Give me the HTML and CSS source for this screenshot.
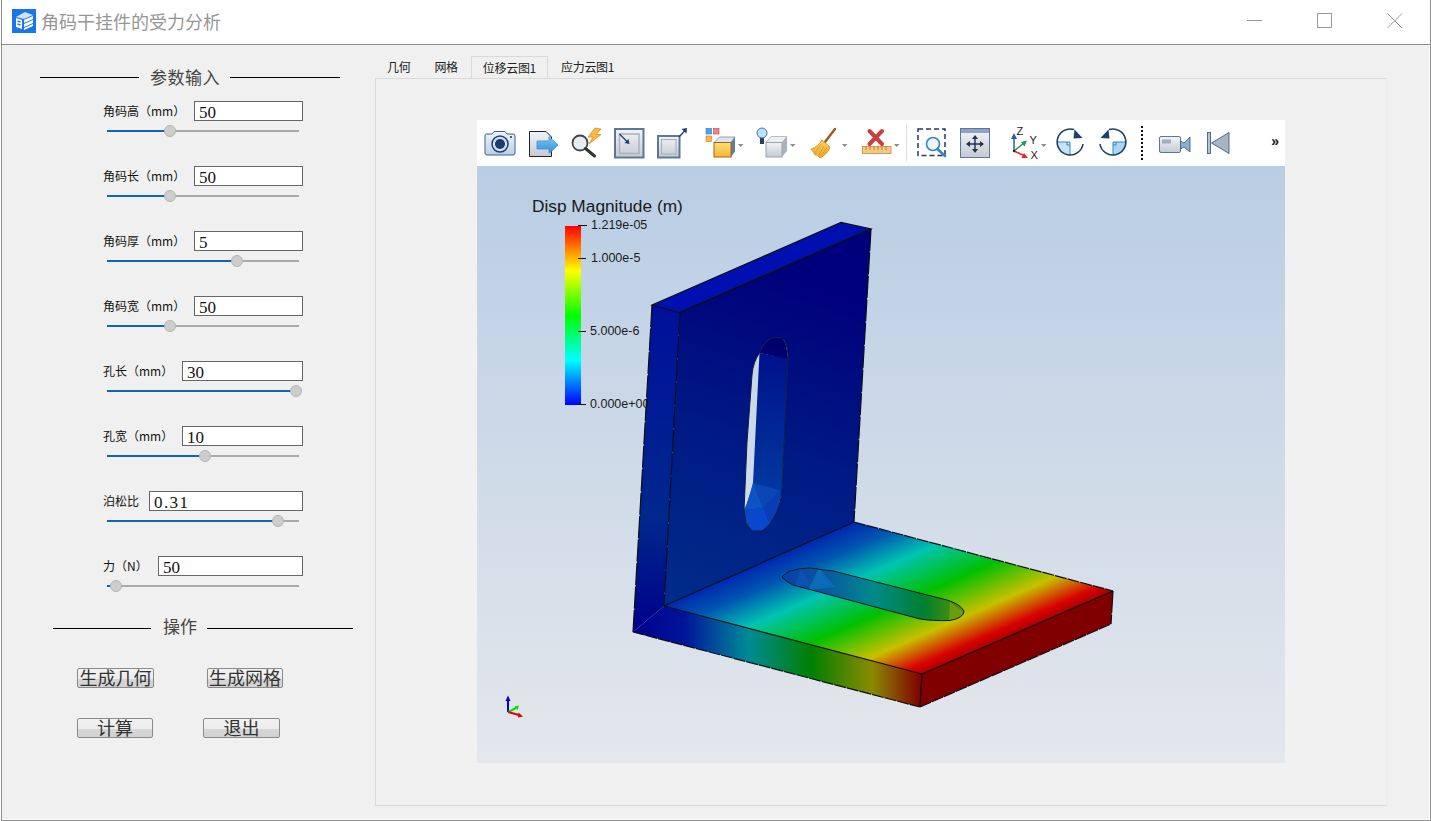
FILE: index.html
```html
<!DOCTYPE html>
<html lang="zh-CN">
<head>
<meta charset="utf-8">
<title>角码干挂件的受力分析</title>
<link rel="stylesheet" href="styles.css">
</head>
<body>
<svg class="defs" aria-hidden="true">
  <defs>
    <linearGradient id="g-metal" x1="0" y1="0" x2="0" y2="1"><stop offset="0" stop-color="#f2f4f7"/><stop offset="1" stop-color="#c4cad3"/></linearGradient>
    <linearGradient id="g-cam" x1="0" y1="0" x2="0" y2="1"><stop offset="0" stop-color="#eef3f9"/><stop offset="1" stop-color="#bccfe4"/></linearGradient>
    <linearGradient id="g-yellow" x1="0" y1="0" x2="0" y2="1"><stop offset="0" stop-color="#ffe07a"/><stop offset="1" stop-color="#f7b733"/></linearGradient>
    <linearGradient id="g-arrow" x1="0" y1="0" x2="0" y2="1"><stop offset="0" stop-color="#7cc6f2"/><stop offset="1" stop-color="#2d8fd8"/></linearGradient>
    <linearGradient id="g-broom" x1="0" y1="0" x2="0" y2="1"><stop offset="0" stop-color="#fbd35e"/><stop offset="1" stop-color="#eda52c"/></linearGradient>
    <linearGradient id="g-bar" x1="0" y1="0" x2="0" y2="1">
      <stop offset="0" stop-color="#ff0000"/><stop offset=".25" stop-color="#ffff00"/><stop offset=".5" stop-color="#00ff00"/><stop offset=".75" stop-color="#00ffff"/><stop offset="1" stop-color="#0000ff"/>
    </linearGradient>
    <linearGradient id="g-floor" gradientUnits="userSpaceOnUse" x1="664" y1="606" x2="730" y2="757">
      <stop offset="0" stop-color="#0028b0"/><stop offset=".14" stop-color="#0058b0"/><stop offset=".32" stop-color="#00c4b0"/><stop offset=".56" stop-color="#00c000"/><stop offset=".79" stop-color="#c8c000"/><stop offset=".95" stop-color="#d80000"/><stop offset="1" stop-color="#b00000"/>
    </linearGradient>
    <linearGradient id="g-front" gradientUnits="userSpaceOnUse" x1="633" y1="0" x2="921" y2="0">
      <stop offset="0" stop-color="#00008a"/><stop offset=".18" stop-color="#00159a"/><stop offset=".3" stop-color="#00559a"/><stop offset=".4" stop-color="#008a95"/><stop offset=".62" stop-color="#008000"/><stop offset=".83" stop-color="#8a8a00"/><stop offset="1" stop-color="#800000"/>
    </linearGradient>
    <linearGradient id="g-wall" gradientUnits="userSpaceOnUse" x1="830" y1="290" x2="720" y2="620">
      <stop offset="0" stop-color="#00007c"/><stop offset=".5" stop-color="#001a84"/><stop offset="1" stop-color="#002c8a"/>
    </linearGradient>
    <linearGradient id="g-side" gradientUnits="userSpaceOnUse" x1="0" y1="305" x2="0" y2="632">
      <stop offset="0" stop-color="#000f9c"/><stop offset=".65" stop-color="#00288c"/><stop offset="1" stop-color="#00008a"/>
    </linearGradient>
    <linearGradient id="g-inner" gradientUnits="userSpaceOnUse" x1="0" y1="350" x2="0" y2="490">
      <stop offset="0" stop-color="#00108a"/><stop offset="1" stop-color="#0038a0"/>
    </linearGradient>
    <linearGradient id="g-slot" gradientUnits="userSpaceOnUse" x1="782" y1="0" x2="964" y2="0">
      <stop offset="0" stop-color="#0a3ea8"/><stop offset=".25" stop-color="#0a5aa0"/><stop offset=".5" stop-color="#008a8a"/><stop offset=".78" stop-color="#008030"/><stop offset="1" stop-color="#5c9400"/>
    </linearGradient>
  </defs>
</svg>

<div class="window">
  <header class="titlebar">
    <svg class="app-icon" width="24" height="24" viewBox="0 0 24 24">
      <rect width="24" height="24" fill="#1976e6"/>
      <path d="M4 8 L13 3 L21 6 L12 10 Z" fill="#cfe4fb"/>
      <path d="M4 9 L10 11 V20 L4 18 Z" fill="#fff"/>
      <path d="M12 11 L21 7 V10 L12 14 Z M12 15 L21 11 V14 L12 18 Z M12 19 L21 15 V17 L12 21 Z" fill="#fff"/>
      <path d="M5.500 12 L8.500 13 M5.500 15 L8.500 16" stroke="#1976e6" stroke-width="1.500"/>
    </svg>
    <h1 class="app-title">角码干挂件的受力分析</h1>
    <div class="win-controls">
      <svg width="16" height="16" viewBox="0 0 16 16"><path d="M0 7.500 H15" stroke="#999"/></svg>
      <svg width="16" height="16" viewBox="0 0 16 16"><rect x=".5" y=".5" width="14" height="14" fill="none" stroke="#999"/></svg>
      <svg width="16" height="16" viewBox="0 0 16 16"><path d="M.5 .5 L15 15 M15 .5 L.5 15" stroke="#999" fill="none"/></svg>
    </div>
  </header>

  <div class="content">
    <aside class="side">
      <div class="legend legend-params"><i class="l1"></i><span>参数输入</span><i class="l2"></i></div>

      <div class="params">
        <div class="param">
          <div class="row"><label class="lab w91">角码高（mm）</label><input class="num" value="50"></div>
          <div class="slider"><b class="fill" style="width:63px"></b><b class="knob" style="left:63px"></b></div>
        </div>
        <div class="param">
          <div class="row"><label class="lab w91">角码长（mm）</label><input class="num" value="50"></div>
          <div class="slider"><b class="fill" style="width:63px"></b><b class="knob" style="left:63px"></b></div>
        </div>
        <div class="param">
          <div class="row"><label class="lab w91">角码厚（mm）</label><input class="num" value="5"></div>
          <div class="slider"><b class="fill" style="width:130px"></b><b class="knob" style="left:130px"></b></div>
        </div>
        <div class="param">
          <div class="row"><label class="lab w91">角码宽（mm）</label><input class="num" value="50"></div>
          <div class="slider"><b class="fill" style="width:63px"></b><b class="knob" style="left:63px"></b></div>
        </div>
        <div class="param">
          <div class="row"><label class="lab w79">孔长（mm）</label><input class="num" value="30"></div>
          <div class="slider"><b class="fill" style="width:189px"></b><b class="knob" style="left:189px"></b></div>
        </div>
        <div class="param">
          <div class="row"><label class="lab w79">孔宽（mm）</label><input class="num" value="10"></div>
          <div class="slider"><b class="fill" style="width:98px"></b><b class="knob" style="left:98px"></b></div>
        </div>
        <div class="param">
          <div class="row"><label class="lab w46">泊松比</label><input class="num wide-digits" value="0.31"></div>
          <div class="slider"><b class="fill" style="width:171px"></b><b class="knob" style="left:171px"></b></div>
        </div>
        <div class="param">
          <div class="row"><label class="lab w55">力（N）</label><input class="num" value="50"></div>
          <div class="slider"><b class="fill" style="width:9px"></b><b class="knob" style="left:9px"></b></div>
        </div>
      </div>

      <div class="legend legend-ops"><i class="l3"></i><span>操作</span><i class="l4"></i></div>

      <div class="btn-row btn-row-a">
        <button class="btn w77">生成几何</button>
        <button class="btn w76">生成网格</button>
      </div>
      <div class="btn-row btn-row-b">
        <button class="btn w76">计算</button>
        <button class="btn w77">退出</button>
      </div>
    </aside>

    <main class="main">
      <nav class="tabs">
        <span class="tab">几何</span>
        <span class="tab">网格</span>
        <span class="tab active">位移云图1</span>
        <span class="tab">应力云图1</span>
      </nav>
      <section class="pane">
        <div class="viewport">
          <div class="toolbar">
            <!-- camera -->
            <svg width="45" height="46" viewBox="477 0 45 46">
              <path d="M486 14 H492 L494 11.500 H505 L507 14 H513 Q515 14 515 16 V33 Q515 35 513 35 H487 Q485 35 485 33 V16 Q485 14 486 14 Z" fill="url(#g-cam)" stroke="#3d6290"/>
              <circle cx="500" cy="24" r="8" fill="#cfe0f2" stroke="#1f3f73" stroke-width="1.500"/>
              <circle cx="500" cy="24" r="5" fill="#1a3a70"/>
              <rect x="510" y="16" width="2" height="2" fill="#3d6290"/>
            </svg>
            <!-- page with arrow -->
            <svg width="43" height="46" viewBox="522 0 43 46">
              <path d="M529.500 11.500 H546 L551.500 17 V36.500 H529.500 Z" fill="url(#g-metal)" stroke="#222"/>
              <path d="M537 21 H549 V16.500 L558 25 L549 33.500 V29 H537 Z" fill="url(#g-arrow)" stroke="#3a93d8" stroke-width=".8"/>
            </svg>
            <!-- zoom lightning -->
            <svg width="43" height="46" viewBox="565 0 43 46">
              <circle cx="580" cy="23" r="7.500" fill="#e8edf2" stroke="#444" stroke-width="1.800"/>
              <path d="M585.500 28.500 L594.500 36" stroke="#333" stroke-width="3" stroke-linecap="round"/>
              <path d="M595 8 L588 17 H593 L589 24 L601 14.500 H596 L601 9 Z" fill="#f8b84a" stroke="#e58a1a" stroke-width=".8"/>
            </svg>
            <!-- zoom to box in -->
            <svg width="43" height="46" viewBox="608 0 43 46">
              <rect x="615" y="9" width="28.500" height="28.500" fill="url(#g-metal)" stroke="#5d7699" stroke-width="2"/>
              <rect x="619.500" y="14" width="19.500" height="19.500" fill="none" stroke="#a9b3c2" stroke-width="1.500"/>
              <path d="M619.500 14 L628 22.500" stroke="#1f3f73" stroke-width="1.300"/>
              <path d="M629.500 24 L624.500 23 L628.500 19 Z" fill="#1f3f73"/>
            </svg>
            <!-- zoom to box out -->
            <svg width="44" height="46" viewBox="651 0 44 46">
              <rect x="658" y="16" width="21.500" height="21.500" fill="url(#g-metal)" stroke="#5d7699" stroke-width="2"/>
              <rect x="661.500" y="19.500" width="14.500" height="14.500" fill="none" stroke="#a9b3c2" stroke-width="1.200"/>
              <path d="M679 17 L685 10.500" stroke="#1f3f73" stroke-width="1.300"/>
              <path d="M687 8 L686.500 13.500 L681.500 9 Z" fill="#1f3f73"/>
            </svg>
            <!-- cube with swatches -->
            <svg width="55" height="46" viewBox="695 0 55 46">
              <rect x="706" y="8.500" width="5.500" height="5.500" fill="#4aa5e8" stroke="#2c76b8" stroke-width=".6"/>
              <rect x="713.500" y="8.500" width="5.500" height="5.500" fill="#e58a8a" stroke="#b44" stroke-width=".6"/>
              <rect x="706" y="16" width="5.500" height="5.500" fill="#f5b95c" stroke="#c77a1a" stroke-width=".6"/>
              <path d="M714 22.500 L719.500 17 H735 L731 22.500 Z" fill="#dfe5ec" stroke="#7b8ea8" stroke-width=".8"/>
              <path d="M731 22.500 L735 17 V31.500 L731 37 Z" fill="#5f7ea6"/>
              <rect x="714" y="22.500" width="17" height="14.500" fill="url(#g-yellow)" stroke="#a5621c" stroke-width="1"/>
              <path d="M738 24 H743.500 L740.700 27 Z" fill="#8a8a8a"/>
            </svg>
            <!-- bulb cube -->
            <svg width="52" height="46" viewBox="750 0 52 46">
              <path d="M766 22.500 L771 16.500 H787 L782 22.500 Z" fill="#eceff3" stroke="#a6adb8" stroke-width=".8"/>
              <path d="M782 22.500 L787 16.500 V31 L782 37 Z" fill="#aab2bd"/>
              <rect x="766" y="22.500" width="16" height="14.500" fill="url(#g-metal)" stroke="#9aa3af" stroke-width="1"/>
              <path d="M760 17 H764 V24 H760 Z" fill="#2f3e58"/>
              <circle cx="762" cy="13" r="5" fill="#bfe2f9" stroke="#3a78b8"/>
              <path d="M790 24 H795.500 L792.700 27 Z" fill="#8a8a8a"/>
            </svg>
            <!-- broom -->
            <svg width="52" height="46" viewBox="802 0 52 46">
              <path d="M835 9 L825 22" stroke="#9a5a22" stroke-width="2.400" stroke-linecap="round"/>
              <path d="M822 20 L830 27 Q828 34 820 38 Q817 34 815 35 Q813 31 811 29 Q818 27 822 20 Z" fill="url(#g-broom)" stroke="#d98a1e" stroke-width=".8"/>
              <path d="M821 24 L815 33 M824 26 L819 35 M827 28 L822 35" stroke="#d98a1e" stroke-width=".6"/>
              <path d="M842 24 H847.500 L844.700 27 Z" fill="#8a8a8a"/>
            </svg>
            <!-- erase ruler -->
            <svg width="49" height="46" viewBox="854 0 49 46">
              <path d="M869.500 11 L882 24 M882 11 L869.500 24" stroke="#c9403f" stroke-width="4" stroke-linecap="round"/>
              <rect x="862.500" y="26.500" width="28.500" height="7" fill="#f3c98a" stroke="#d59a4a"/>
              <path d="M866 26.500 V30 M870 26.500 V30 M874 26.500 V30 M878 26.500 V30 M882 26.500 V30 M886 26.500 V30" stroke="#a8742c" stroke-width=".8"/>
              <path d="M894 24 H899.500 L896.700 27 Z" fill="#8a8a8a"/>
            </svg>
            <i class="sep"></i>
            <!-- select zoom -->
            <svg width="43" height="46" viewBox="910 0 43 46">
              <rect x="918" y="9" width="27" height="26.500" fill="none" stroke="#223a66" stroke-width="1.500" stroke-dasharray="5 3"/>
              <circle cx="933" cy="24" r="6.500" fill="#eef5fb" stroke="#2f86c8" stroke-width="1.600"/>
              <path d="M937.500 29 L945 36" stroke="#2f86c8" stroke-width="2.600" stroke-linecap="round"/>
            </svg>
            <!-- pan -->
            <svg width="44" height="46" viewBox="953 0 44 46">
              <rect x="960.500" y="8.500" width="29" height="29" fill="url(#g-metal)" stroke="#5d7699"/>
              <rect x="961" y="9" width="28" height="4" fill="#8ea3c2"/>
              <path d="M975 17 V31 M968 24 H982" stroke="#1f3050" stroke-width="1.400"/>
              <path d="M975 15 L978 19 H972 Z M975 33 L978 29 H972 Z M966 24 L970 21 V27 Z M984 24 L980 21 V27 Z" fill="#1f3050"/>
            </svg>
            <!-- axes -->
            <svg width="52" height="46" viewBox="997 0 52 46">
              <path d="M1014 31 V16" stroke="#2c5aa8" stroke-width="1.500"/>
              <path d="M1014 13 L1017 19 H1011 Z" fill="#2c5aa8"/>
              <path d="M1014 31 L1024 23" stroke="#1e9a52" stroke-width="1.500"/>
              <path d="M1027 20.500 L1024.500 26.500 L1021 22 Z" fill="#1e9a52"/>
              <path d="M1014 31 L1025 36" stroke="#e02828" stroke-width="1.500"/>
              <path d="M1028 38 L1021.500 38 L1024 33 Z" fill="#e02828"/>
              <circle cx="1014" cy="31" r="1.200" fill="#222"/>
              <text class="ax" x="1016.500" y="15">Z</text>
              <text class="ax" x="1029.500" y="24">Y</text>
              <text class="ax" x="1030.500" y="39">X</text>
              <path d="M1041 24 H1046.500 L1043.700 27 Z" fill="#8a8a8a"/>
            </svg>
            <!-- rotate cw -->
            <svg width="43" height="46" viewBox="1049 0 43 46">
              <path d="M1070 22 V35 A13 13 0 0 1 1057 22 Z" fill="#c6e3f5"/>
              <path d="M1067 22 V25 H1070" fill="none" stroke="#2f86c8" stroke-width="1"/>
              <path d="M1057 22 H1070 V35" fill="none" stroke="#2f86c8" stroke-width="1"/>
              <path d="M1083 24 A13 13 0 1 1 1074 9.600" fill="none" stroke="#1f3f6b" stroke-width="1.600"/>
              <path d="M1074.500 9.500 L1082.500 18 L1073.500 18.500 Z" fill="#1f3f6b"/>
            </svg>
            <!-- rotate ccw -->
            <svg width="43" height="46" viewBox="1092 0 43 46">
              <path d="M1113 22 V35 A13 13 0 0 0 1126 22 Z" fill="#a8d8f3"/>
              <path d="M1116 22 V25 H1113" fill="none" stroke="#2f86c8" stroke-width="1"/>
              <path d="M1113 35 V22 H1126" fill="none" stroke="#2f86c8" stroke-width="1"/>
              <path d="M1100 24 A13 13 0 1 0 1109 9.600" fill="none" stroke="#1f3f6b" stroke-width="1.600"/>
              <path d="M1108.500 9.500 L1100.500 18 L1109.500 18.500 Z" fill="#1f3f6b"/>
            </svg>
            <i class="dotted"></i>
            <!-- video camera -->
            <svg width="48" height="46" viewBox="1149 0 48 46">
              <rect x="1159.500" y="16.500" width="21" height="16" rx="1.500" fill="url(#g-metal)" stroke="#5d7699"/>
              <rect x="1162" y="19.500" width="9" height="4" fill="#a3acb8"/>
              <path d="M1180.500 21 L1184 23 L1190 17 V32 L1184 27 L1180.500 29 Z" fill="#8eb0cc" stroke="#3d6290" stroke-width=".9"/>
            </svg>
            <!-- reset back -->
            <svg width="43" height="46" viewBox="1197 0 43 46">
              <rect x="1207.500" y="12.500" width="3" height="21" fill="#b6c3d3" stroke="#3d5f8c" stroke-width=".9"/>
              <path d="M1229 12.500 V33.500 L1211.500 23 Z" fill="#aab4c0" stroke="#3d5f8c" stroke-width=".9"/>
            </svg>
            <span class="more">»</span>
          </div>

          <div class="scene">
            <svg class="scene-svg" width="808" height="597" viewBox="477 166 808 597">
              <!-- back plate -->
              <path d="M652 305 L680 312.500 L664 606 L633 632 Z" fill="url(#g-side)"/>
              <path d="M652 305 L841 222.500 L871 229 L680 312.500 Z" fill="#0010b0"/>
              <path fill-rule="evenodd" fill="url(#g-wall)" d="M680 312.500 L871 229 L854 522 L664 606 Z
                M773 337 L782 338 Q787 342 788 355 L782 492 Q781 500 777 512 L770 524 L762 531 L752 531 L746 523 L744 510 L747 442 L752 375 Q753 362 760 352 Q763 342 773 337 Z"/>
              <!-- wall slot interior -->
              <path d="M759.500 353 L788 358 L782 492 L777 512 L770 524 L762 531 L752 531 L746 523 L744 510 Q751 495 753 483 Z" fill="url(#g-inner)"/>
              <path d="M759.500 353 Q763 342 773 337 L782 338 Q787 342 788 359 Z" fill="#00006c"/>
              <path d="M753 483 L780.500 490.500 L763 508 Z" fill="#0a46b4"/>
              <path d="M780.500 490.500 L778 510 L770 524 L763 508 Z" fill="#0a3cb8"/>
              <path d="M753 483 L763 508 L745 510 Z" fill="#0c54c4"/>
              <path d="M745 510 L763 508 L770 524 L762 531 L752 531 L746 523 Z" fill="#0848cc"/>
              <path d="M773 337 L782 338 Q787 342 788 355 L782 492 Q781 500 777 512 L770 524 L762 531 L752 531 L746 523 L744 510 L747 442 L752 375 Q753 362 760 352 Q763 342 773 337 Z" fill="none" stroke="#101a40" stroke-width="1"/>

              <!-- base plate -->
              <path d="M633 632 L664 606 L922 674 L920 707 Z" fill="url(#g-front)"/>
              <path fill-rule="evenodd" fill="url(#g-floor)" d="M664 606 L854 522 L1113 591 L922 674 Z
                M782 577 Q785 573 790 571 Q800 568 810 568 L833 571 L947 600 Q960 604 964 611 Q964 618 950 620.500 Q932 621 920 619 L823 593 L793 585 Q785 581 782 577 Z"/>
              <path d="M782 577 Q785 573 790 571 Q800 568 810 568 L833 571 L947 600 Q960 604 964 611 Q964 618 950 620.500 Q932 621 920 619 L823 593 L793 585 Q785 581 782 577 Z" fill="url(#g-slot)"/>
              <path d="M795 586 L801 569 L812 586 Z" fill="#0c52b4"/>
              <path d="M808 590 L819 568 L835 587 Z" fill="#0a6cb4"/>
              <path d="M949 620.500 L950 602 L963 612 Q962 618 949 620.500 Z" fill="#6a9c10"/>
              <path d="M782 577 Q785 573 790 571 Q800 568 810 568 L833 571 L947 600 Q960 604 964 611 Q964 618 950 620.500 Q932 621 920 619 L823 593 L793 585 Q785 581 782 577 Z" fill="none" stroke="#101820" stroke-width="1"/>
              <path d="M922 674 L1113 591 L1111 624 L920 707 Z" fill="#800000"/>

              <!-- feature edges -->
              <path class="edge" d="M652 305 L841 222.500 L871 229 L680 312.500 Z"/>
              <path class="edge" d="M680 312.500 L871 229"/>
              <path class="edge dash" d="M680 312.500 L664 606"/>
              <path class="edge dash" d="M652 305 L633 632"/>
              <path class="edge dash" d="M871 229 L854 522"/>
              <path class="edge" d="M664 606 L854 522"/>
              <path class="edge" d="M664 606 L922 674"/>
              <path class="edge dash2" d="M854 522 L1113 591"/>
              <path class="edge" d="M922 674 L1113 591"/>
              <path class="edge" d="M922 674 L920 707"/>
              <path class="edge dash" d="M1113 591 L1111 624"/>
              <path class="edge dash2" d="M633 632 L920 707"/>
              <path class="edge dash2" d="M920 707 L1111 624"/>

              <!-- colour bar -->
              <text class="bar-title" x="532" y="212">Disp Magnitude (m)</text>
              <rect x="565" y="226" width="16" height="179" fill="url(#g-bar)"/>
              <path d="M578 225.500 H587 M578 258.500 H586 M578 331.500 H586 M578 404.500 H586" stroke="#111" stroke-width="1"/>
              <text class="bar-label" x="591" y="229">1.219e-05</text>
              <text class="bar-label" x="591" y="262">1.000e-5</text>
              <text class="bar-label" x="590" y="335">5.000e-6</text>
              <text class="bar-label" x="590" y="408">0.000e+00</text>

              <!-- orientation axes -->
              <path d="M508 712 V699" stroke="#0000e0" stroke-width="2"/>
              <path d="M508 695.500 L510.500 701 H505.500 Z" fill="#0000e0"/>
              <path d="M508 712 L516 708" stroke="#00e000" stroke-width="2"/>
              <path d="M519 705.500 L517.500 710 L514.500 706.500 Z" fill="#00e000"/>
              <path d="M508 712 L519 715" stroke="#e00000" stroke-width="2"/>
              <path d="M523 716.500 L518 717.500 L518.500 712.500 Z" fill="#e00000"/>
            </svg>
          </div>
        </div>
      </section>
    </main>
  </div>
</div>
</body>
</html>
```

FILE: styles.css
```css
* { box-sizing: border-box; }

html, body {
  margin: 0;
  padding: 0;
  background: #fff;
}

body {
  width: 1431px;
  height: 821px;
  overflow: hidden;
  font-family: "Noto Sans CJK SC", "Liberation Sans", sans-serif;
}

.defs {
  position: absolute;
  width: 0;
  height: 0;
}

.window {
  width: 1430px;
  height: 821px;
  margin-left: 1px;
  border-left: 1px solid #8e8e8e;
  border-right: 1px solid #8e8e8e;
  border-bottom: 1px solid #8e8e8e;
  display: flex;
  flex-direction: column;
  background: #fff;
}

/* title bar */
.titlebar {
  height: 45px;
  flex: none;
  display: flex;
  align-items: center;
  padding: 0 27px 2px 10px;
  border-bottom: 1px solid #8e8e8e;
  background: #fff;
}

.app-icon { flex: none; }

.app-title {
  margin: 0 0 0 5px;
  font-size: 18px;
  font-weight: 400;
  color: #969696;
  white-space: nowrap;
}

.win-controls {
  margin-left: auto;
  display: flex;
  gap: 54px;
}

/* body */
.content {
  flex: 1;
  display: flex;
  margin: 0 1px 1px 0;
  background: #f0f0f0;
  min-height: 0;
}

.side {
  width: 373px;
  flex: none;
  padding-top: 20px;
}

.legend {
  display: flex;
  align-items: center;
  height: 24px;
  font-size: 17px;
  color: #444;
  white-space: nowrap;
}

.legend i {
  display: block;
  height: 1px;
  background: #000;
}

.legend-params { margin-left: 38px; }
.legend-params span { margin: 0 10px 0 11px; width: 70px; letter-spacing: .5px; padding-bottom: 2px; }
.l1 { width: 99px; }
.l2 { width: 110px; }

.legend-ops { margin: 25px 0 0 51px; }
.legend-ops span { margin: 0 10px 0 12px; width: 34px; padding-bottom: 5px; }
.l3 { width: 98px; }
.l4 { width: 146px; }

.params {
  width: 301px;
  margin-top: 12px;
  display: flex;
  flex-direction: column;
  gap: 30px;
}

.param { height: 35px; }

.row {
  display: flex;
  align-items: center;
  padding-left: 101px;
  height: 20px;
}

.lab {
  flex: none;
  font-size: 12px;
  line-height: 18px;
  color: #111;
  white-space: nowrap;
}

.w91 { width: 91px; }
.w79 { width: 79px; }
.w46 { width: 46px; }
.w55 { width: 55px; }

.num {
  flex: 1;
  min-width: 0;
  height: 20px;
  padding: 3px 0 0 4px;
  border: 1px solid #666;
  border-radius: 0;
  outline: 0;
  background: #fff;
  color: #111;
  font-family: "Liberation Serif", serif;
  font-size: 17px;
  line-height: 16px;
}

.wide-digits { letter-spacing: 1.400px; }

.slider {
  position: relative;
  width: 192px;
  height: 10px;
  margin: 5px 0 0 105px;
}

.slider::before {
  content: "";
  position: absolute;
  left: 0;
  right: 0;
  top: 4px;
  height: 2px;
  background: #aaa;
}

.fill {
  position: absolute;
  left: 0;
  top: 4px;
  height: 2px;
  background: #1063b5;
}

.knob {
  position: absolute;
  top: -1px;
  width: 12px;
  height: 12px;
  margin-left: -6px;
  border-radius: 50%;
  background: #cdcdcd;
  border: 1px solid #b4b4b4;
}

.btn-row {
  display: flex;
  padding-left: 75px;
}

.btn-row-a { margin-top: 28px; gap: 53px; }
.btn-row-b { margin-top: 30px; gap: 50px; }

.btn {
  height: 20px;
  padding: 0 0 2px;
  border: 1px solid #8a8a8a;
  border-radius: 2px;
  background: linear-gradient(#f2f2f2 0, #ececec 55%, #d6d6d6 56%, #d2d2d2 100%);
  color: #333;
  font-family: "Noto Sans CJK SC", sans-serif;
  font-size: 18px;
  line-height: 16px;
  white-space: nowrap;
}

.w77 { width: 77px; }
.w76 { width: 76px; }

/* tabs */
.main {
  flex: none;
  width: 1012px;
  padding-top: 11px;
}

.tabs {
  display: flex;
  gap: 2px;
  height: 22px;
  padding-left: 1px;
}

.tab {
  padding: 0 11px;
  font-size: 12px;
  line-height: 22px;
  letter-spacing: -.3px;
  color: #222;
  white-space: nowrap;
}

.tab.active {
  border: 1px solid #d9d9d9;
  border-bottom: 0;
  line-height: 21px;
}

.pane {
  width: 1012px;
  height: 728px;
  padding-top: 41px;
  border: 1px solid #d9d9d9;
  border-right-color: #ececec;
  background: #f1f1f1;
}

.viewport {
  width: 808px;
  height: 643px;
  margin: 0 auto;
  display: flex;
  flex-direction: column;
}

/* VTK toolbar */
.toolbar {
  height: 46px;
  flex: none;
  display: flex;
  align-items: stretch;
  background: #fff;
}

.toolbar svg {
  flex: none;
  display: block;
}

.ax {
  font-family: "Liberation Sans", sans-serif;
  font-size: 11px;
  fill: #222;
}

.sep {
  display: block;
  width: 7px;
  margin: 5px 0;
  background: linear-gradient(#ddd, #ddd) 3px 0 / 1px 100% no-repeat;
}

.dotted {
  display: block;
  width: 14px;
  margin: 6px 0;
  background: repeating-linear-gradient(#111 0 2px, transparent 2px 4px) 6px 0 / 2px 100% no-repeat;
}

.more {
  margin-left: auto;
  padding: 11px 6px 0 0;
  font-family: "Liberation Sans", sans-serif;
  font-size: 14px;
  font-weight: 700;
  line-height: 20px;
  color: #111;
}

/* 3D scene */
.scene {
  flex: 1;
  background: linear-gradient(#b9cde4 0, #e4e7ec 100%);
}

.scene-svg { display: block; }

.edge {
  fill: none;
  stroke: #0c0e16;
  stroke-width: 1.200;
}

.dash { stroke-dasharray: 22 1.500; }
.dash2 { stroke-dasharray: 12 1; }

.bar-title {
  font-family: "Liberation Sans", sans-serif;
  font-size: 17.300px;
  fill: #1a1a1a;
}

.bar-label {
  font-family: "Liberation Sans", sans-serif;
  font-size: 12.500px;
  fill: #1a1a1a;
}
```
